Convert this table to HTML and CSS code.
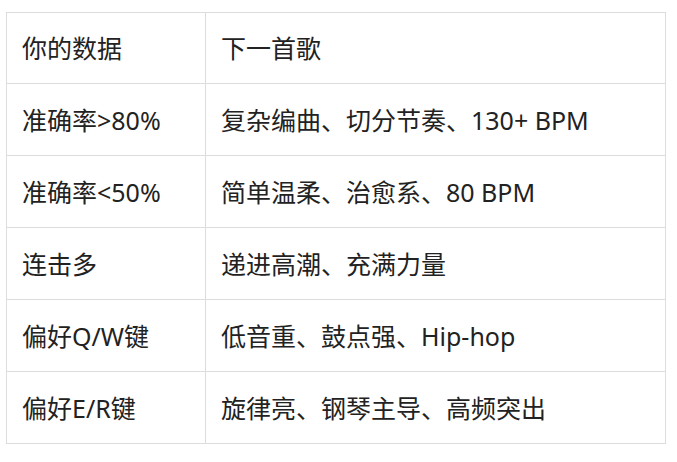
FILE: index.html
```html
<!DOCTYPE html>
<html lang="zh">
<head>
<meta charset="utf-8">
<link rel="stylesheet" href="styles.css">
</head>
<body>
<table class="data-table">
  <tr><td class="col-a">你的数据</td><td>下一首歌</td></tr>
  <tr><td class="col-a">准确率&gt;80%</td><td>复杂编曲、切分节奏、130+ BPM</td></tr>
  <tr><td class="col-a">准确率&lt;50%</td><td>简单温柔、治愈系、80 BPM</td></tr>
  <tr><td class="col-a">连击多</td><td>递进高潮、充满力量</td></tr>
  <tr><td class="col-a">偏好Q/W键</td><td>低音重、鼓点强、Hip-hop</td></tr>
  <tr><td class="col-a">偏好E/R键</td><td>旋律亮、钢琴主导、高频突出</td></tr>
</table>
</body>
</html>
```

FILE: styles.css
```css
html, body {
  margin: 0;
  padding: 0;
  background: #ffffff;
}
body {
  padding: 12px 0 0 6px;
  font-family: "Noto Sans", "Noto Sans CJK SC", sans-serif;
  color: #222222;
}
.data-table {
  border-collapse: collapse;
  width: 660px;
  font-size: 25px;
}
.data-table td {
  border: 1px solid #dddddd;
  height: 72px;
  padding: 0 15px;
  box-sizing: border-box;
  vertical-align: middle;
  line-height: 1.2;
}
.data-table tr:first-child td {
  height: 71px;
}
.data-table .col-a {
  width: 199px;
}
```
